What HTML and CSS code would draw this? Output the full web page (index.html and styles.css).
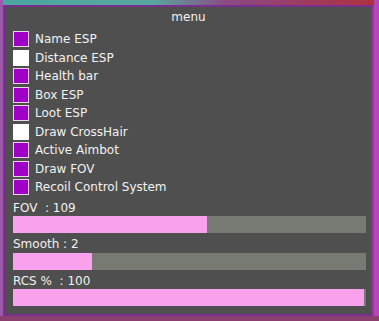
FILE: index.html
```html
<!DOCTYPE html>
<html>
<head>
<meta charset="utf-8">
<link rel="stylesheet" href="styles.css">
</head>
<body>
<div class="scene">
  <div class="panel">
    <div class="title">menu</div>
    <ul class="options">
      <li class="opt"><span class="box on"></span><span class="lbl">Name ESP</span></li>
      <li class="opt"><span class="box off"></span><span class="lbl">Distance ESP</span></li>
      <li class="opt"><span class="box on"></span><span class="lbl">Health bar</span></li>
      <li class="opt"><span class="box on"></span><span class="lbl">Box ESP</span></li>
      <li class="opt"><span class="box on"></span><span class="lbl">Loot ESP</span></li>
      <li class="opt"><span class="box off"></span><span class="lbl">Draw CrossHair</span></li>
      <li class="opt"><span class="box on"></span><span class="lbl">Active Aimbot</span></li>
      <li class="opt"><span class="box on"></span><span class="lbl">Draw FOV</span></li>
      <li class="opt"><span class="box on"></span><span class="lbl">Recoil Control System</span></li>
    </ul>
    <div class="slider">
      <div class="slabel">FOV&nbsp; : 109</div>
      <div class="track"><div class="fill" style="width:55%"></div></div>
    </div>
    <div class="slider">
      <div class="slabel">Smooth : 2</div>
      <div class="track"><div class="fill" style="width:22.4%"></div></div>
    </div>
    <div class="slider">
      <div class="slabel">RCS %&nbsp; : 100</div>
      <div class="track"><div class="fill full"></div></div>
    </div>
  </div>
</div>
</body>
</html>
```
FILE: styles.css
```css
html, body {
  margin: 0;
  padding: 0;
}
body {
  width: 379px;
  height: 321px;
  overflow: hidden;
  background: linear-gradient(90deg, #4aa7a0 0%, #58a89e 40%, #8a4a86 60%, #b0303c 100%);
}
.scene {
  width: 379px;
  height: 321px;
  padding: 5px 5px 5px 3px;
  box-sizing: border-box;
  background:
    linear-gradient(180deg, transparent 0 316px, #8a3f6e 316px),
    linear-gradient(90deg, #9a5aa8 0 3px, transparent 3px 374px, #b048b8 374px);
}
.panel {
  width: 371px;
  height: 311px;
  box-sizing: border-box;
  background: #4f4f4f;
  border: 2px solid #7a2f8e;
  border-right-color: #a62fb0;
  padding: 0 8px;
  font-family: "DejaVu Sans", Verdana, sans-serif;
  font-size: 12px;
  color: #f2f2f2;
  display: flex;
  flex-direction: column;
}
.title {
  height: 23px;
  line-height: 21px;
  text-align: center;
  font-size: 12px;
}
.options {
  list-style: none;
  margin: 0;
  padding: 0;
}
.opt {
  height: 18.5px;
  display: flex;
  align-items: center;
  gap: 6px;
}
.box {
  width: 16px;
  height: 16px;
  box-sizing: border-box;
  flex: none;
}
.box.on {
  background: #9e00c6;
  border: 1px solid #e6d8e8;
}
.box.off {
  background: #ffffff;
}
.slider {
  display: flex;
  flex-direction: column;
}
.slabel {
  height: 19.5px;
  line-height: 22px;
}
.track {
  height: 17px;
  width: 353px;
  background: #767a72;
}
.fill {
  height: 100%;
  background: #f9a1ec;
}
.fill.full {
  width: 351px;
}
```
